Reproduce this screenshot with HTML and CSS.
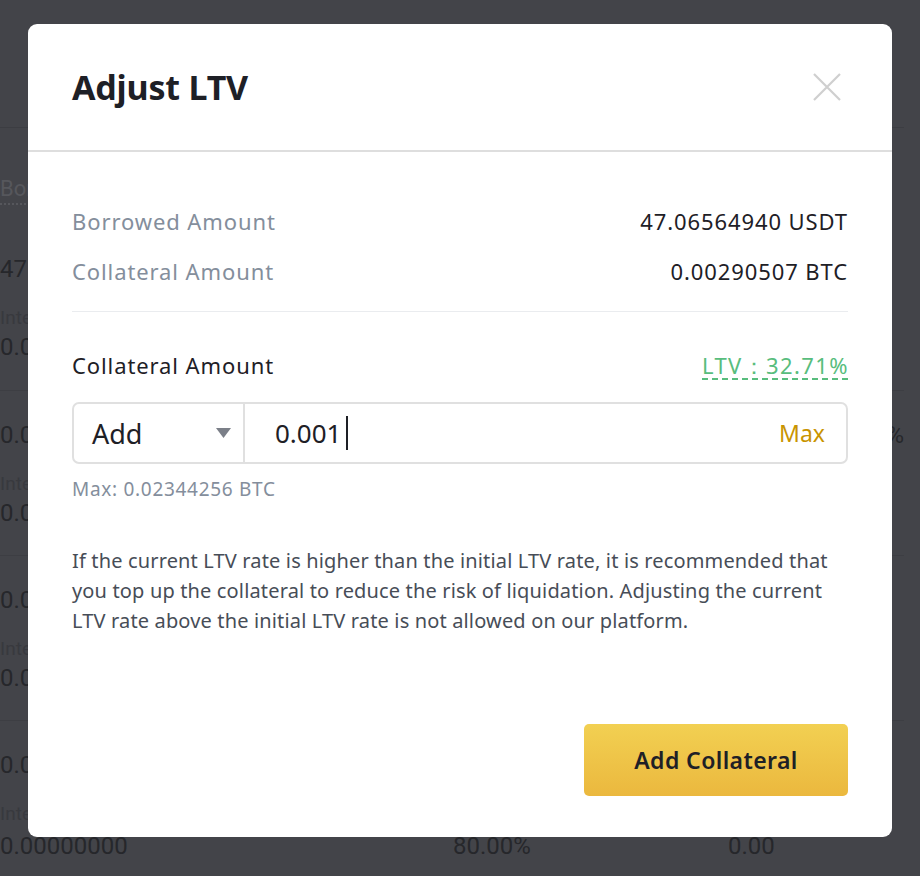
FILE: index.html
```html
<!DOCTYPE html>
<html lang="en">
<head>
<meta charset="utf-8">
<title>Adjust LTV</title>
<link rel="stylesheet" href="styles.css">
</head>
<body>
<div class="page">
  <div class="page-top"></div>
  <div class="page-thead"><span class="th">Borrowed</span></div>
  <div class="page-row first">
    <div class="cell"><span class="num">47.06564940</span><span class="lbl">Interest</span><span class="num">0.00000000</span></div>
    <div class="cell"></div>
    <div class="cell"></div>
    <div class="cell end"></div>
  </div>
  <div class="page-row">
    <div class="cell"><span class="num">0.00000000</span><span class="lbl">Interest</span><span class="num">0.00000000</span></div>
    <div class="cell"></div>
    <div class="cell"></div>
    <div class="cell end"><span class="num">0.00%</span></div>
  </div>
  <div class="page-row">
    <div class="cell"><span class="num">0.00000000</span><span class="lbl">Interest</span><span class="num">0.00000000</span></div>
    <div class="cell"></div>
    <div class="cell"></div>
    <div class="cell end"></div>
  </div>
  <div class="page-row">
    <div class="cell"><span class="num">0.00000000</span><span class="lbl">Interest</span><span class="num low-num">0.00000000</span></div>
    <div class="cell low"><span class="num">80.00%</span></div>
    <div class="cell low"><span class="num">0.00</span></div>
    <div class="cell end"></div>
  </div>
</div>

<div class="overlay">
  <div class="modal">
    <div class="modal-head">
      <h2 class="modal-title">Adjust LTV</h2>
      <button class="close" aria-label="Close">
        <svg width="30" height="30" viewBox="0 0 30 30"><path d="M2 2 L28 28 M28 2 L2 28" stroke="#cfcfcf" stroke-width="2.2" fill="none"/></svg>
      </button>
    </div>
    <div class="modal-body">
      <div class="info-row"><span class="label">Borrowed Amount</span><span class="value">47.06564940 USDT</span></div>
      <div class="info-row"><span class="label">Collateral Amount</span><span class="value">0.00290507 BTC</span></div>
      <div class="divider"></div>
      <div class="field-head"><span class="field-title">Collateral Amount</span><span class="ltv">LTV：32.71%</span></div>
      <div class="input-box">
        <div class="select"><span>Add</span><svg width="15" height="10" viewBox="0 0 15 10"><path d="M0 0 H15 L7.5 10 Z" fill="#7b7f88"/></svg></div>
        <div class="amount"><span class="amount-text">0.001</span><span class="caret"></span><span class="max">Max</span></div>
      </div>
      <div class="hint">Max: 0.02344256 BTC</div>
      <p class="note">If the current LTV rate is higher than the initial LTV rate, it is recommended that you top up the collateral to reduce the risk of liquidation. Adjusting the current LTV rate above the initial LTV rate is not allowed on our platform.</p>
      <div class="actions"><button class="primary">Add Collateral</button></div>
    </div>
  </div>
</div>
</body>
</html>
```

FILE: styles.css
```css
* { box-sizing: border-box; }
html, body { margin: 0; padding: 0; }
body {
  width: 920px;
  height: 876px;
  overflow: hidden;
  background: #434449;
  font-family: "Noto Sans", "Open Sans", sans-serif;
  position: relative;
}

/* dimmed page behind the dialog */
.page { width: 920px; padding-right: 16px; color: #26272b; font-family: Roboto, "Noto Sans", sans-serif; }
.page-top { height: 128px; border-bottom: 1px solid #3c3d42; }
.page-thead { height: 97px; padding-top: 48px; }
.th { font-size: 22px; color: #56575c; border-bottom: 2px dotted #56575c; padding-bottom: 2px; }
.page-row {
  height: 165px;
  border-top: 1px solid #3d3e43;
  display: grid;
  grid-template-columns: 453px 275px 1fr 20px;
  padding: 28px 0 0 0;
}
.page-row.first { border-top: none; }
.cell { display: flex; flex-direction: column; }
.cell.end { align-items: flex-end; }
.cell.low { padding-top: 81px; }
.num { font-size: 24px; line-height: 32px; height: 32px; color: #26272b; white-space: nowrap; }
.num.low-num { margin-top: 3px; }
.lbl { font-size: 19px; line-height: 26px; margin-top: 20px; color: #38393e; }

/* dialog */
.overlay {
  position: absolute;
  inset: 0;
  padding: 24px 28px 38px;
}
.modal {
  background: #fff;
  border-radius: 9px;
  overflow: hidden;
}
.modal-head {
  height: 128px;
  border-bottom: 2px solid #dedede;
  display: flex;
  align-items: center;
  justify-content: space-between;
  padding: 0 50px 0 44px;
}
.modal-title {
  margin: 0;
  font-size: 34px;
  font-weight: 700;
  color: #1e2026;
  letter-spacing: -0.2px;
}
.close {
  border: 0;
  background: none;
  padding: 0;
  width: 30px;
  height: 30px;
  display: flex;
}
.modal-body { padding: 54px 44px 41px; }
.info-row {
  display: flex;
  justify-content: space-between;
  line-height: 30px;
  font-size: 22px;
  letter-spacing: 0.9px;
}
.info-row + .info-row { margin-top: 20px; }
.label { color: #848e9c; }
.value { color: #1e2026; }
.divider { height: 1px; background: #eaecef; margin-top: 25px; }
.field-head {
  margin-top: 38px;
  display: flex;
  justify-content: space-between;
  align-items: flex-start;
  font-size: 22px;
  line-height: 30px;
  letter-spacing: 0.9px;
}
.field-title { color: #1e2026; }
.ltv {
  color: #58bd7d;
  letter-spacing: 1.4px;
  margin-right: -1px;
  background: repeating-linear-gradient(90deg, #58bd7d 0 6px, transparent 6px 10px) left bottom / 100% 2px no-repeat;
}
.input-box {
  margin-top: 22px;
  height: 62px;
  border: 2px solid #e0e0e0;
  border-radius: 7px;
  display: flex;
}
.select {
  width: 171px;
  border-right: 2px solid #e0e0e0;
  display: flex;
  align-items: center;
  justify-content: space-between;
  padding: 0 12px 0 18px;
  font-size: 27px;
  color: #1e2026;
}
.amount {
  flex: 1;
  display: flex;
  align-items: center;
  padding: 0 21px 0 30px;
  font-size: 26px;
  color: #1e2026;
}
.caret { width: 2px; height: 34px; background: #1e2026; margin-left: 5px; }
.max { margin-left: auto; font-size: 23px; color: #c99400; }
.hint { margin-top: 13px; font-size: 19px; line-height: 24px; letter-spacing: 0.7px; color: #848e9c; }
.note {
  margin: 45px 0 0;
  font-size: 20px;
  line-height: 30px;
  letter-spacing: 0.15px;
  color: #474d57;
}
.actions { margin-top: 88px; display: flex; justify-content: flex-end; }
.primary {
  width: 264px;
  height: 72px;
  border: 0;
  border-radius: 5px;
  background: linear-gradient(180deg, #f2d052 0%, #ebb83e 100%);
  font-family: "Noto Sans", "Open Sans", sans-serif;
  font-size: 23px;
  font-weight: 600;
  letter-spacing: 0.4px;
  color: #1e2026;
}
```
